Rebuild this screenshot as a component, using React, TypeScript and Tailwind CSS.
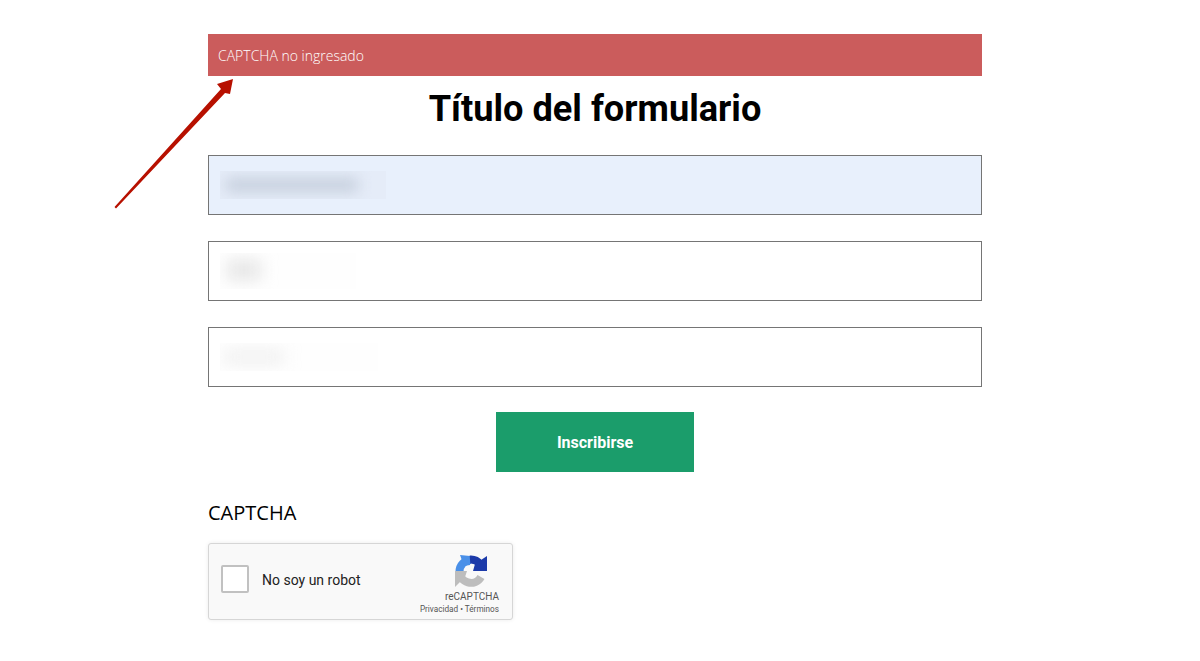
import React from 'react';

const fieldClass = 'flex h-[60px] items-center border border-[#757575] px-[11px]';

const ArrowOverlay = () => (
    <svg className="absolute left-[110px] top-[74px]" width="130" height="136" viewBox="0 0 130 136">
        <polygon points="4.5,133 6,134.5 115,19 120,20 123,5 107,10 111,15" fill="#b71000" />
    </svg>
);

const RecaptchaLogo = () => (
    <svg width="32" height="32" viewBox="0 0 32 32" fill="none">
        <path d="M4.5 17 A11.5 11.5 0 0 1 16 5" stroke="#4a90e8" strokeWidth="8" />
        <polygon points="5,0 15,1 15,10 9,11" fill="#4a90e8" />
        <path d="M15 4.5 A11.5 11.5 0 0 1 25 9" stroke="#1c3aa9" strokeWidth="8" />
        <polygon points="20,9 32,1 32,16 18,16" fill="#1c3aa9" />
        <path d="M4.5 16 A11.5 11.5 0 0 0 26 22" stroke="#bdbdbd" strokeWidth="8" />
        <polygon points="0,16 12,16 10,22 0,32" fill="#bdbdbd" />
    </svg>
);

const Recaptcha = () => (
    <div className="flex h-[77px] w-[305px] rounded-[3px] border border-[#d6d6d6] bg-[#f9f9f9] shadow-[0_0_4px_rgba(0,0,0,0.08)] font-['Roboto',sans-serif]">
        <div className="ml-[12px] mt-[21px] h-[28px] w-[28px] rounded-[2px] border-2 border-[#c1c1c1] bg-white" />
        <span className="ml-[13px] mt-[27px] flex-1 text-[14px] leading-[18px] text-[#222]">No soy un robot</span>
        <div className="mr-[13px] flex w-[80px] flex-col items-end pt-[11px]">
            <div className="mr-[12px]">
                <RecaptchaLogo />
            </div>
            <span className="mt-[3px] text-[10px] leading-[14px] text-[#555]">reCAPTCHA</span>
            <span className="text-[8.2px] leading-[11px] whitespace-nowrap text-[#555]">Privacidad • Términos</span>
        </div>
    </div>
);

export default function App() {
    return (
        <div className="relative h-[661px] w-[1200px] overflow-hidden bg-white pl-[208px] pt-[34px]">
            <ArrowOverlay />
            <div className="flex w-[774px] flex-col">
                <div className="flex h-[42px] items-center bg-[#cb5c5c] px-[10px] font-['Open_Sans',sans-serif] text-[14px] font-light text-white">
                    CAPTCHA no ingresado
                </div>
                <h1 className="mt-[10px] h-[69px] text-center font-['Roboto',sans-serif] text-[36.2px] leading-[46px] font-bold text-black">
                    Título del formulario
                </h1>
                <div className="flex flex-col gap-[26px]">
                    <div className={`${fieldClass} bg-[#e8f0fc]`}>
                        <div className="h-[28px] w-[166px] overflow-hidden bg-[#e5ecf8] pl-[6px] pt-[7px]">
                            <div className="h-[14px] w-[132px] bg-[#c6cfdd] blur-[7px]" />
                        </div>
                    </div>
                    <div className={`${fieldClass} bg-white`}>
                        <div className="h-[36px] w-[136px] overflow-hidden bg-[#fefefe] pl-[7px] pt-[7px]">
                            <div className="h-[20px] w-[34px] bg-[#e6e6e6] blur-[8px]" />
                        </div>
                    </div>
                    <div className={`${fieldClass} bg-white`}>
                        <div className="h-[28px] w-[158px] overflow-hidden bg-[#fefefe] pl-[4px] pt-[8px]">
                            <div className="h-[12px] w-[60px] bg-[#eeeeee] blur-[8px]" />
                        </div>
                    </div>
                </div>
                <button className="mx-auto mt-[25px] h-[60px] w-[198px] bg-[#1b9d6b] pt-[1px] font-['Roboto',sans-serif] text-[16px] font-bold text-white">
                    Inscribirse
                </button>
                <div className="mt-[27px] font-['Open_Sans',sans-serif] text-[20px] leading-[28px] text-black">CAPTCHA</div>
                <div className="mt-[16px]">
                    <Recaptcha />
                </div>
            </div>
        </div>
    );
}
